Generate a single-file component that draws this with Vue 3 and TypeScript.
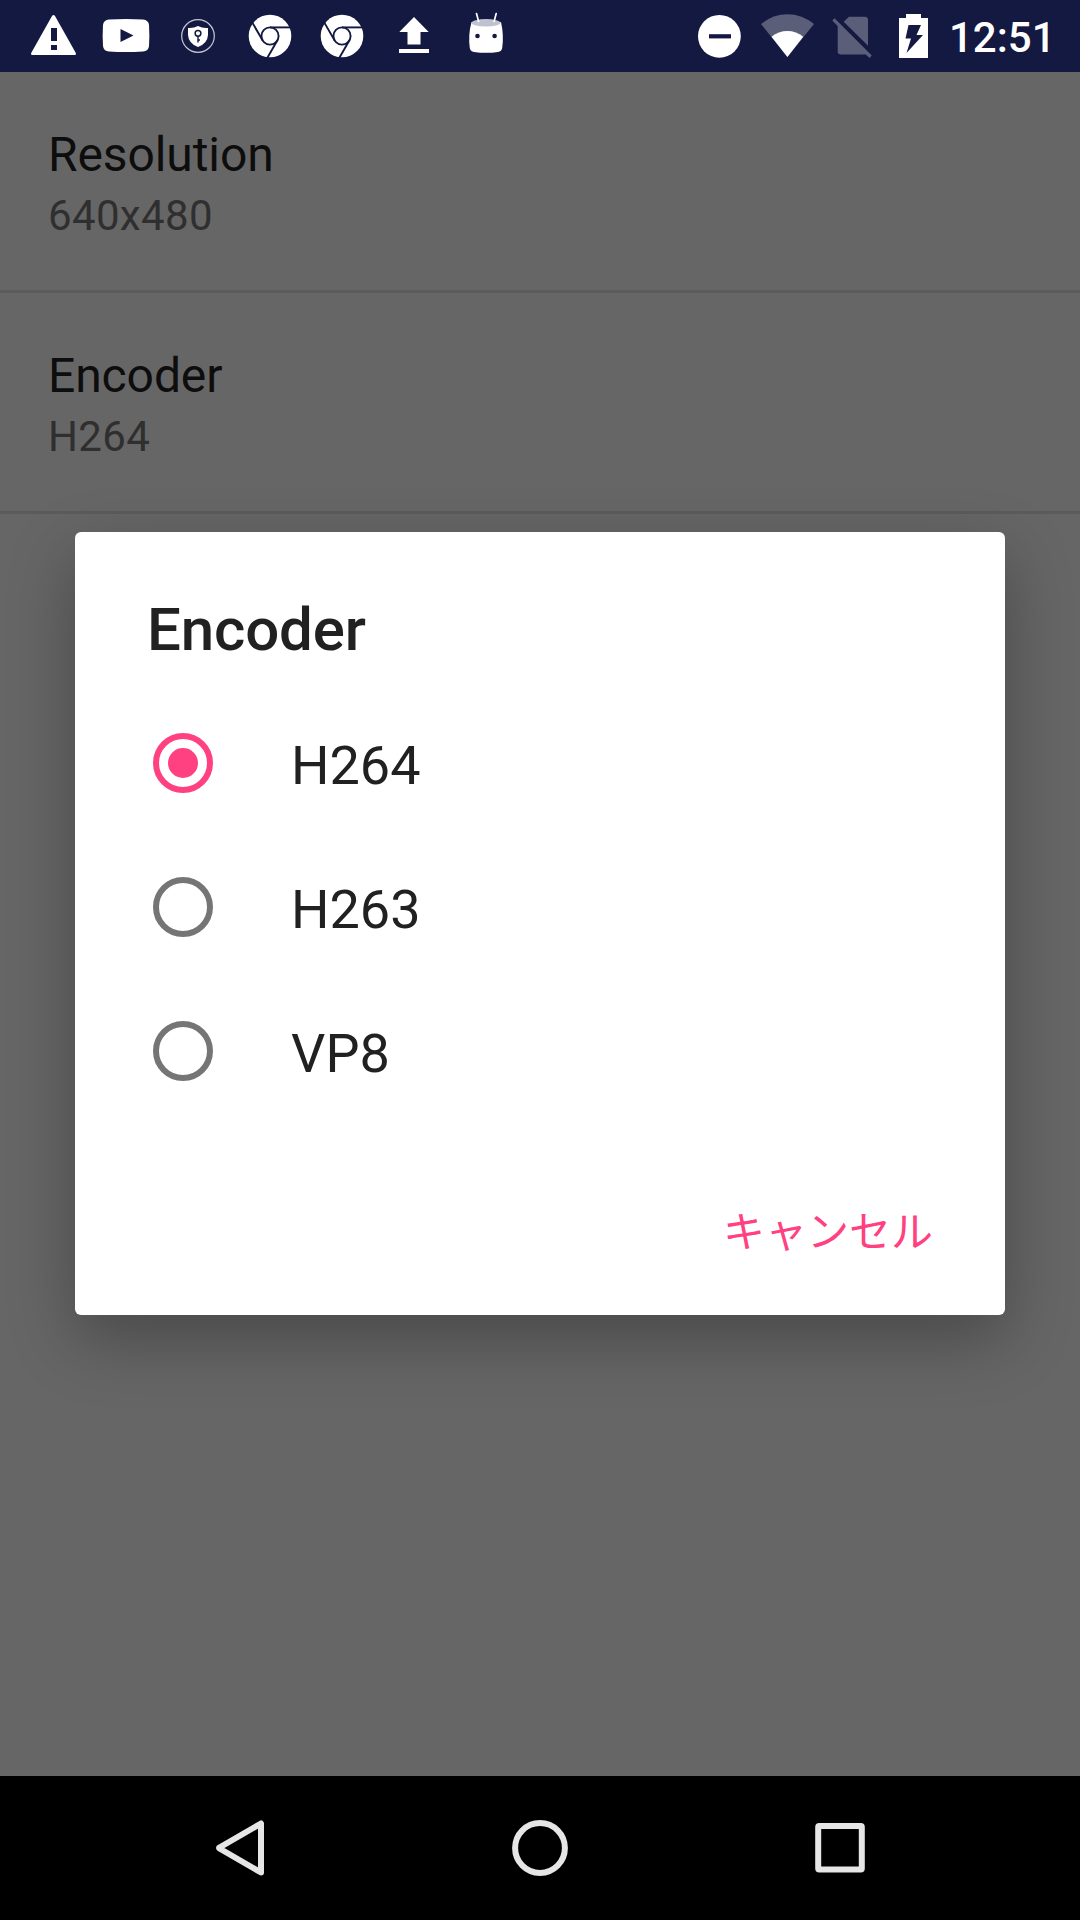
<script setup lang="ts">
import { ref } from 'vue'

interface Setting {
  title: string
  summary: string
}

const settings: Setting[] = [
  { title: 'Resolution', summary: '640x480' },
  { title: 'Encoder', summary: 'H264' },
]

const encoders: string[] = ['H264', 'H263', 'VP8']
const selected = ref<string>('H264')
const chromeTurns: number[] = [0, 120, 240]
</script>

<template>
  <div class="screen">
    <header class="status-bar">
      <div class="notifications">
        <svg class="icon" viewBox="0 0 72 72">
          <path d="M35.5 15Q36.3 15 37 16L57.8 53Q58.4 55 57 55H14Q12.600 55 13.200 53L34 16Q34.700 15 35.500 15Z" fill="#fff" />
          <path d="M33 28h6v13h-6zM33 45h6v5h-6z" fill="#141941" />
        </svg>
        <svg class="icon" viewBox="0 0 72 72">
          <path d="M19 19.500Q36 18.500 53 19.500Q58.500 20 59 25Q59.700 35.500 59 46Q58.500 51 53 51.500Q36 52.500 19 51.500Q13.500 51 13 46Q12.300 35.500 13 25Q13.500 20 19 19.500Z" fill="#fff" />
          <path d="M30.500 29L43.500 35.500L30.500 42Z" fill="#141941" />
        </svg>
        <svg class="icon" viewBox="0 0 72 72">
          <circle cx="36" cy="36" r="16.300" fill="none" stroke="#c6c8d3" stroke-width="1.200" />
          <path d="M36 26Q40.500 28.500 46 28V35Q45.500 43.500 36 47Q26.500 43.500 26 35V28Q31.500 28.500 36 26Z" fill="#fff" />
          <circle cx="36" cy="33.300" r="2.900" fill="none" stroke="#141941" stroke-width="1.500" />
          <path d="M36 36V42.500M36 40h2" fill="none" stroke="#141941" stroke-width="1.400" />
        </svg>
        <svg v-for="n in 2" :key="n" class="icon" viewBox="0 0 72 72">
          <circle cx="36" cy="36" r="21.300" fill="#fff" />
          <g fill="none" stroke="#141941" stroke-width="1.900">
            <circle cx="36" cy="36" r="8.600" />
            <path v-for="t in chromeTurns" :key="t" d="M36 27.400H57" :transform="`rotate(${t} 36 36)`" />
          </g>
        </svg>
        <svg class="icon" viewBox="0 0 72 72">
          <path d="M36 17L50.700 32H42.500V44.500H29.500V32H21.300ZM21 49h30v4H21z" fill="#fff" />
        </svg>
        <svg class="icon" viewBox="0 0 72 72">
          <path d="M21.500 22Q36 29 51 22Q54 35 52.200 48Q51.700 51.500 48 52Q36 53.700 24 52Q20.300 51.500 19.800 48Q18 35 21.500 22Z" fill="#fff" />
          <ellipse cx="36" cy="22.800" rx="14.500" ry="3.700" fill="#c0c2cf" />
          <path d="M26.500 13.500L28.600 21.500M46.200 13.500L44.100 21.500" stroke="#fff" stroke-width="1.700" stroke-linecap="round" />
          <circle cx="27.500" cy="36" r="2.300" fill="#141941" />
          <circle cx="44.600" cy="36" r="2.300" fill="#141941" />
        </svg>
      </div>
      <div class="system">
        <svg class="icon" viewBox="0 0 72 72">
          <circle cx="36.400" cy="36.300" r="21.400" fill="#fff" />
          <path d="M26 34.200h22v4.200H26z" fill="#141941" />
        </svg>
        <svg class="icon mid" viewBox="0 0 65 72">
          <path d="M32.400 57L6 24Q17.500 14.200 32.400 14.200T59 24Z" fill="#5b5e79" />
          <path d="M32.400 57L16.500 36.800Q23.500 31 32.400 31T48.200 36.800Z" fill="#fff" />
        </svg>
        <svg class="icon mid" viewBox="0 0 65 72">
          <path d="M23.700 21.800L29 16.700H44.500Q48 16.700 48 20V45.700Z" fill="#5b5e79" />
          <path d="M14.500 18.200L51.800 55.500L49.500 58L45.800 54.500H21Q17.700 54.500 17.700 51.500V26L12.300 20.500Z" fill="#5b5e79" />
        </svg>
        <svg class="icon slim" viewBox="0 0 57 72">
          <path d="M21 14H36V18H43V58H14V18H21Z" fill="#fff" />
          <path d="M23.500 25H36L31.500 35H38L21.500 53L26 38.500H20.500Z" fill="#141941" />
        </svg>
        <span class="clock">12:51</span>
      </div>
    </header>

    <main class="content">
      <div v-for="s in settings" :key="s.title" class="setting">
        <div class="setting-title">{{ s.title }}</div>
        <div class="setting-summary">{{ s.summary }}</div>
      </div>

      <section class="dialog" role="dialog">
        <h2 class="dialog-title">Encoder</h2>
        <div class="options">
          <div v-for="e in encoders" :key="e" class="option" @click="selected = e">
            <span class="radio" :class="{ checked: e === selected }"></span>
            <span class="option-label">{{ e }}</span>
          </div>
        </div>
        <div class="actions">
          <span class="cancel">キャンセル</span>
        </div>
      </section>
    </main>

    <nav class="nav-bar">
      <svg class="nav-icon" viewBox="0 0 72 72">
        <path d="M57 11.500V60.500L15.500 36.500Q14.500 36 15.500 35.500Z" />
      </svg>
      <svg class="nav-icon" viewBox="0 0 72 72">
        <circle cx="36" cy="36" r="24.900" />
      </svg>
      <svg class="nav-icon" viewBox="0 0 72 72">
        <rect x="14.200" y="13.900" width="43.600" height="43.600" rx="1" />
      </svg>
    </nav>
  </div>
</template>

<style>
body {
  margin: 0;
}
</style>

<style scoped>
.screen {
  display: flex;
  flex-direction: column;
  width: 1080px;
  height: 1920px;
  overflow: hidden;
  background: #666;
  font-family: Roboto, "Noto Sans CJK JP", sans-serif;
}

.status-bar {
  display: flex;
  justify-content: space-between;
  height: 72px;
  padding-left: 18px;
  background: #141941;
}

.notifications,
.system {
  display: flex;
}

.system {
  width: 397px;
}

.icon {
  display: block;
  flex: none;
  width: 72px;
  height: 72px;
}

.mid {
  width: 65px;
}

.slim {
  width: 57px;
}

.clock {
  padding-left: 7px;
  color: #fff;
  font-size: 42px;
  font-weight: 500;
  line-height: 76px;
}

.content {
  position: relative;
  flex: 1;
}

.setting {
  box-sizing: border-box;
  height: 221px;
  padding: 55px 48px 0;
  border-bottom: 3px solid #5b5b5b;
}

.setting-title {
  color: #0d0d0d;
  font-size: 48px;
  letter-spacing: -0.1px;
  line-height: 56px;
}

.setting-summary {
  margin-top: 8px;
  color: #2f2f2f;
  font-size: 42px;
  letter-spacing: 0.35px;
  line-height: 50px;
}

.dialog {
  position: absolute;
  top: 460px;
  left: 75px;
  box-sizing: border-box;
  width: 930px;
  height: 783px;
  padding: 63px 72px 0;
  border-radius: 6px;
  background: #fff;
  box-shadow: 0 24px 66px rgba(0, 0, 0, 0.29);
  color: #212121;
}

.dialog-title {
  margin: 0;
  font-size: 60px;
  font-weight: 500;
  letter-spacing: -0.15px;
  line-height: 70px;
}

.options {
  margin-top: 26px;
}

.option {
  display: flex;
  align-items: center;
  height: 144px;
}

.radio {
  box-sizing: border-box;
  display: grid;
  place-items: center;
  width: 60px;
  height: 60px;
  margin-left: 6px;
  border: 6px solid #757575;
  border-radius: 50%;
}

.radio.checked {
  border-color: #ff4081;
}

.radio.checked::after {
  width: 30px;
  height: 30px;
  border-radius: 50%;
  background: #ff4081;
  content: "";
}

.option-label {
  padding-top: 5px;
  margin-left: 78px;
  font-size: 54px;
  line-height: 63px;
}

.actions {
  display: flex;
  justify-content: flex-end;
  margin-top: 79px;
}

.cancel {
  color: #ff4081;
  font-size: 42px;
  line-height: 62px;
}

.nav-bar {
  display: flex;
  justify-content: space-around;
  align-items: center;
  height: 144px;
  padding: 0 90px;
  background: #000;
}

.nav-icon {
  width: 72px;
  height: 72px;
  fill: none;
  stroke: #e6e6e6;
  stroke-width: 6;
  stroke-linejoin: round;
}
</style>
